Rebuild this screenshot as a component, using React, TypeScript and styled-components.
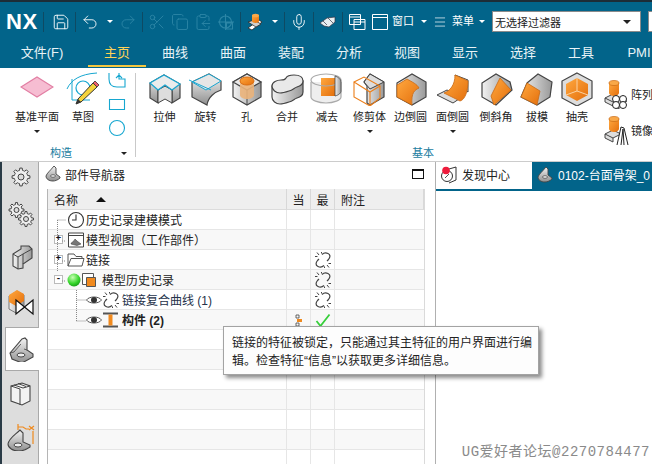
import React, { FC } from "react";
import styled, { createGlobalStyle } from "styled-components";
import { Save, Undo2, Redo2, Scissors, Copy, ClipboardCopy, Mic, Menu } from "lucide-react";

const teal = "#02648a";
const dim = "#2c86a6";
const line = "#444";

const GlobalStyle = createGlobalStyle`
    html, body { margin: 0; padding: 0; background: #fff; }
    body { font-family: "Liberation Sans", "Noto Sans CJK SC", sans-serif; color: #222; }
`;

const gearPath = (cx: number, cy: number, r1: number, r2: number, teeth: number) => {
    let d = "";
    const step = (Math.PI * 2) / teeth;
    for (let i = 0; i < teeth; i++) {
        const a = i * step;
        const pts: [number, number][] = [
            [r1, a - step * 0.5],
            [r1, a - step * 0.28],
            [r2, a - step * 0.17],
            [r2, a + step * 0.17],
            [r1, a + step * 0.28],
        ];
        pts.forEach(([r, t], j) => {
            d += `${i === 0 && j === 0 ? "M" : "L"}${(cx + r * Math.cos(t)).toFixed(2)} ${(cy + r * Math.sin(t)).toFixed(2)} `;
        });
    }
    return d + "Z";
};

const Defs = () => (
    <svg width="0" height="0" style={{ position: "absolute" }}>
        <defs>
            <linearGradient id="gr" x1="0" y1="0" x2="0" y2="1">
                <stop offset="0" stopColor="#f4f4f4" />
                <stop offset="1" stopColor="#8f8f8f" />
            </linearGradient>
            <linearGradient id="gs" x1="0" y1="0" x2="1" y2="0">
                <stop offset="0" stopColor="#f2f2f2" />
                <stop offset="1" stopColor="#999" />
            </linearGradient>
            <linearGradient id="or" x1="0" y1="0" x2="1" y2="1">
                <stop offset="0" stopColor="#ffa83f" />
                <stop offset="1" stopColor="#e46f0c" />
            </linearGradient>
        </defs>
    </svg>
);

const Ico: FC<{ s?: number; w?: number; children: React.ReactNode }> = ({ s = 34, w, children }) => (
    <svg width={w ?? s} height={s} viewBox={`0 0 ${w ?? s} ${s}`} fill="none" style={{ display: "block", flex: "none" }}>
        {children}
    </svg>
);

const Cube = () => (
    <>
        <path d="M3 10 17 2l14 8v15l-14 8-14-8z" fill="url(#gs)" stroke={line} strokeWidth="1.2" />
        <path d="M3 10 17 2l14 8-14 8z" fill="#e9e9e9" stroke={line} strokeWidth="1.2" />
        <path d="M17 18v15" stroke={line} strokeWidth="1" />
    </>
);

const DatumIcon = () => <Ico><path d="M1 15 17 5l16 10-16 10z" fill="#f6bdd2" stroke="#e27ea3" strokeWidth="1.2" /></Ico>;
const SketchIcon = () => (
    <Ico w={34}>
        <path d="M1 17C5 8 14 2 31 1" stroke="#17a7d0" strokeWidth="1" />
        <path d="M6 7v21h18" stroke="#17a7d0" strokeWidth="1" />
        <circle cx="17" cy="16" r="7" stroke="#17a7d0" strokeWidth="1.2" />
        <path d="M12 27 27 11l4 4-16 15-5 2z" fill="#f4d23c" stroke="#333" strokeWidth="1" />
        <path d="M27 11l2-2 4 4-2 2z" fill="#ef5d6c" stroke="#333" strokeWidth=".8" />
        <path d="M10 32l2-5 3 3z" fill="#333" />
    </Ico>
);
const ExtrudeIcon = () => (
    <Ico>
        <path d="M2 11 16 3l16 9v14l-8 5V18l-7-4-7 4v13l-8-5z" fill="url(#gr)" stroke={line} strokeWidth="1.2" />
        <path d="M10 18l7-4 7 4v13l-7-4-7 4z" fill="#ddd" stroke={line} strokeWidth="1" />
        <path d="M2 11 16 3l16 9-8 6-7-5-7 5z" fill="#ececec" stroke="#19a6d1" strokeWidth="1.2" />
    </Ico>
);
const RevolveIcon = () => (
    <Ico>
        <path d="M3 10 20 2l12 7v9c-6 2-13 7-14 15L3 25z" fill="url(#gr)" stroke={line} strokeWidth="1.2" />
        <path d="M3 10 20 2l12 7-15 9z" fill="#e6e6e6" stroke="#19a6d1" strokeWidth="1" />
        <path d="M0 8l22 10" stroke="#19a6d1" strokeWidth="1" />
    </Ico>
);
const HoleIcon = () => (
    <Ico>
        <Cube />
        <path d="M10 9v14c0 2 3 4 7 4s7-2 7-4V9z" fill="#eab27a" opacity=".9" />
        <ellipse cx="17" cy="9" rx="7" ry="4" fill="url(#or)" stroke="#d96c10" />
    </Ico>
);
const MergeIcon = () => (
    <Ico>
        <path d="M2 14V25c0 4 4 7 8 7 3 0 6-1 9-2 4-1 5-3 8-4 3-1 6-2 6-6V9L24 12z" fill="url(#gs)" stroke={line} strokeWidth="1.2" />
        <path d="M2 14c0-4 5-6 9-6 3 0 4 0 5-2 1-2 4-3 8-3 5 0 9 2 9 6s-3 5-6 6c-3 1-4 3-8 4-3 1-6 2-9 2-4 0-8-3-8-7z" fill="#e9e9e9" stroke={line} strokeWidth="1.2" />
    </Ico>
);
const SubtractIcon = () => (
    <Ico>
        <path d="M1 10v15c0 3 7 6 15 6s15-3 15-6V10" fill="#eee" stroke="#aaa" strokeWidth="1.2" />
        <path d="M11 6h14v18H11z" fill="url(#or)" />
        <ellipse cx="16" cy="8" rx="15" ry="6" fill="none" stroke="#aaa" strokeWidth="1.2" />
        <path d="M25 4v20c4-1 6-3 6-5V10c0-3-3-5-6-6z" fill="url(#gs)" stroke={line} strokeWidth=".8" />
    </Ico>
);
const TrimIcon = () => (
    <Ico>
        <path d="M17 2l14 8v15l-14 8-3-2V14l-3-4z" fill="url(#gs)" stroke={line} strokeWidth="1.2" />
        <path d="M11 10 17 2l14 8-14 7z" fill="#ddd" stroke={line} strokeWidth="1" />
        <path d="M1 10l10-5 16 9-10 6zM1 10v15l16 9V20M27 14v12l-10 8" stroke="#ec7f1a" strokeWidth="1.1" />
    </Ico>
);
const EdgeBlendIcon = () => (
    <Ico>
        <path d="M3 11 18 2l14 8v15l-14 8-15-8z" fill="url(#gs)" stroke={line} strokeWidth="1.2" />
        <path d="M3 13 13 7c5 3 10 5 12 9-4 2-8 4-7 17L3 25z" fill="url(#or)" stroke="#c96a14" strokeWidth=".8" />
    </Ico>
);
const FaceBlendIcon = () => (
    <Ico>
        <path d="M19 3 32 8v12l-9-6zM1 23l10-5 15 7-9 6z" fill="#ddd" stroke={line} strokeWidth="1" />
        <path d="M19 3l13 6c0 10-3 19-8 20L8 21c6-2 11-8 11-18z" fill="url(#or)" stroke="#c96a14" strokeWidth=".8" />
    </Ico>
);
const ChamferIcon = () => (
    <Ico>
        <path d="M3 11 17 2l14 8 2 8-16 15-14-8z" fill="url(#gs)" stroke={line} strokeWidth="1.2" />
        <path d="M22 6l11 12-17 15-3-9 3-6z" fill="url(#or)" stroke="#c96a14" strokeWidth=".8" transform="translate(-1 0)" />
    </Ico>
);
const DraftIcon = () => (
    <Ico>
        <path d="M7 11 18 2l14 8-2 15-13 8L1 25z" fill="url(#gs)" stroke={line} strokeWidth="1.2" />
        <path d="M7 11l13 8-3 14L1 25z" fill="url(#or)" stroke="#c96a14" strokeWidth=".8" />
    </Ico>
);
const ShellIcon = () => (
    <Ico>
        <path d="M17 1l15 8v17l-15 8-15-8V9z" fill="#ddd" stroke={line} strokeWidth="1.2" />
        <path d="M17 6 28 12v11l-11 6-11-6V12z" fill="url(#or)" />
        <path d="M17 6v13l-11 4M17 19l11 4" stroke="#fbd2a2" strokeWidth="1" />
    </Ico>
);
const PatternIcon = () => (
    <Ico s={30} w={26}>
        <path d="M2 19l8-4 14 7-8 4zM2 19v4l14 7v-4" fill="#ddd" stroke={line} strokeWidth="1" />
        <path d="M6 4v10c0 1.500 2 3 5 3s5-1.500 5-3V4z" fill="url(#or)" />
        <ellipse cx="11" cy="4" rx="5" ry="2.500" fill="#f9a848" stroke="#c96a14" strokeWidth=".7" />
        <circle cx="13" cy="20" r="3.500" fill="#fff" stroke="#222" />
        <circle cx="20" cy="20" r="3.500" fill="#fff" stroke="#222" />
        <circle cx="13" cy="26" r="3.500" fill="#fff" stroke="#222" />
        <circle cx="20" cy="26" r="3.500" fill="#fff" stroke="#222" />
    </Ico>
);
const MirrorIcon = () => (
    <Ico s={30} w={26}>
        <path d="M2 19l8-4 8 4-8 4zM2 19v4l8 4v-4" fill="#ddd" stroke={line} strokeWidth="1" />
        <path d="M6 4v10c0 1.500 2 3 5 3s5-1.500 5-3V4z" fill="url(#or)" />
        <ellipse cx="11" cy="4" rx="5" ry="2.500" fill="#f9a848" stroke="#c96a14" strokeWidth=".7" />
        <path d="M14 30l4-18 3 1 4 17M18 30l2-16 1 16" stroke="#222" strokeWidth="1" fill="#fff" />
    </Ico>
);

const ToolsIcon = () => (
    <Ico s={18} w={16}>
        <path d="M1 15 12 7l3 2-10 8z" fill="#fff" stroke="#222" strokeWidth=".8" />
        <path d="M1 9l6-2 7 4-5 3z" fill="#cfcfcf" stroke="#222" strokeWidth=".7" />
        <path d="M5 2v6c0 1 1.500 2 3.500 2S12 9 12 8V2z" fill="url(#or)" />
        <ellipse cx="8.500" cy="2.500" rx="3.500" ry="1.800" fill="#f9a848" />
    </Ico>
);
const HandIcon = () => (
    <Ico s={18} w={16}>
        <path d="M0 10l7-5 8-1v5l-6 5-5-1z" fill="#e8eef1" stroke="#334" strokeWidth=".7" />
        <path d="M8 5l5 5M3 8l4 4" stroke="#334" strokeWidth=".7" />
    </Ico>
);
const CascadeIcon = () => (
    <Ico s={18} w={17}>
        <path d="M.5 1.500h11v10H.5zM5 6.500h11v10H5z" fill={teal} stroke="#fff" strokeWidth="1" />
        <path d="M.5 4h11M5 9h11" stroke="#fff" strokeWidth="1" />
    </Ico>
);
const WindowIcon = () => (
    <Ico s={18} w={16}>
        <path d="M.5 1.500h15v15H.5zM.5 4.500h15" stroke="#fff" strokeWidth="1" />
    </Ico>
);
const SnapIcon = () => (
    <Ico s={18}>
        <circle cx="8.500" cy="9" r="6" stroke={dim} strokeWidth="1.100" />
        <path d="M8.500 1v16M1 9h16M9.500 10h6v6h-6z" stroke={dim} strokeWidth="1.100" />
    </Ico>
);

const GearIcon = () => (
    <Ico s={20}>
        <path d={gearPath(10, 10, 6.800, 9, 8)} fill="#eee" stroke={line} />
        <circle cx="10" cy="10" r="3" fill="#dcdcdc" stroke={line} />
    </Ico>
);
const GearsIcon = () => (
    <Ico s={26}>
        <path d={gearPath(8.500, 9, 5.500, 7.500, 8)} fill="#eee" stroke={line} />
        <circle cx="8.500" cy="9" r="2.500" fill="#dcdcdc" stroke={line} />
        <path d={gearPath(18, 18, 5.500, 7.500, 8)} fill="#eee" stroke={line} />
        <circle cx="18" cy="18" r="2.500" fill="#dcdcdc" stroke={line} />
    </Ico>
);
const BlockIcon = () => (
    <Ico s={26}>
        <path d="M5 10 13 5l0-3 8 0 3 3v9l-9 6v4l-5 1-5-3z" fill="url(#gs)" stroke={line} strokeWidth="1.100" />
        <path d="M5 10l5 3 5-3 9-5M10 13v12M15 10l0 10" stroke={line} strokeWidth="1" />
    </Ico>
);
const AssemblyIcon = () => (
    <Ico s={28} w={26}>
        <path d="M1 7l8-5 7 4v13l-8 5-7-4z" fill="url(#gs)" stroke="#777" />
        <path d="M1 6l8-5 7 4v7l-8 5-7-4z" fill="url(#or)" />
        <path d="M8 11 25 25V11L8 25z" fill="#fff" stroke="#111" strokeWidth="1.200" />
    </Ico>
);
const BracketIcon = () => (
    <Ico s={26} w={25}>
        <path d="M1 17 13 3l3-1 2 2v10l6 4v3l-11 6-10-4z" fill="url(#gr)" stroke={line} strokeWidth="1.100" />
        <path d="M1 17l4-1 6-7 1-1M18 14l-3-1" stroke={line} strokeWidth=".8" />
        <ellipse cx="12" cy="19" rx="4" ry="2" fill="#eee" stroke={line} />
    </Ico>
);
const SmallBracket = () => (
    <Ico s={18}>
        <path d="M1 11C2 8 5 6 9 1l2 2v6l4 3v1c-2 2-5 3-7 3-4 0-7-2-7-5z" fill="url(#gr)" stroke={line} strokeWidth=".9" />
        <ellipse cx="8" cy="11" rx="2.500" ry="1.300" fill="#eee" stroke={line} strokeWidth=".7" />
    </Ico>
);
const BooksIcon = () => (
    <Ico s={26}>
        <path d="M3 6l11-3 8 3v15l-8 4-11-4z" fill="#f3f3f3" stroke={line} strokeWidth="1.100" />
        <path d="M3 6l9 3v16M6 5l9 3M10 3.500l8 3M15 8l7-2" stroke={line} strokeWidth="1" />
    </Ico>
);
const DimPartIcon = () => (
    <Ico s={28}>
        <path d="M1 21C2 15 8 12 13 7l3 3v9l7 3v2c-3 2-8 4-11 4-6 0-11-3-11-7z" fill="url(#gr)" stroke={line} strokeWidth="1.100" />
        <ellipse cx="11" cy="22" rx="4" ry="2" fill="#eee" stroke={line} />
        <path d="M11 1v6M11 4h5l3 2h3M22 3l5 4M27 3l-5 4M26 8v13" stroke="#ef8a1f" strokeWidth="1.200" />
    </Ico>
);

const ClockIcon = () => (
    <Ico s={18}>
        <circle cx="9" cy="9" r="7.500" fill="#fff" stroke="#333" strokeWidth="1.100" />
        <path d="M9 3.500V9H5" stroke="#333" strokeWidth="1.100" />
    </Ico>
);
const ViewIcon = () => (
    <Ico s={18}>
        <path d="M1.500 2h15v14h-15zM1.500 4.500h15" stroke="#444" fill="#fff" />
        <path d="M4 13c0-2 3-2 4-5l2 2 4 3-4 1.500z" fill="#777" stroke="#444" strokeWidth=".6" />
    </Ico>
);
const FolderIcon = () => (
    <Ico s={18}>
        <path d="M1 15V3h6l2 2.500h6v2M1 15l3-7.500h13L15 15z" stroke="#555" fill="#fff" />
    </Ico>
);
const BallIcon = () => (
    <Ico s={16} w={14}>
        <defs>
            <radialGradient id="ball" cx=".4" cy=".3" r=".8">
                <stop offset="0" stopColor="#c8ffb4" />
                <stop offset=".6" stopColor="#35d52a" />
                <stop offset="1" stopColor="#118a14" />
            </radialGradient>
        </defs>
        <circle cx="7" cy="8" r="6.500" fill="url(#ball)" />
    </Ico>
);
const HistoryIcon = () => (
    <Ico s={16} w={15}>
        <path d="M.500 1.500h11v11H.500z" fill="#fff" stroke="#555" />
        <path d="M4.500 5.500h9v9h-9z" fill="#f18a1e" stroke="#555" />
    </Ico>
);
const EyeIcon = () => (
    <Ico s={14} w={16}>
        <path d="M.5 7C3 3 13 3 15.500 7 13 11 3 11 .5 7z" fill="#fff" stroke="#555" />
        <circle cx="8" cy="7" r="3" fill="#333" />
    </Ico>
);
const BrokenLinkIcon = () => (
    <Ico s={18}>
        <g stroke="#444" strokeWidth="1.200" fill="none">
            <path d="M8 3.500c2-2 4-2 6-1 3 1.500 2 4 .5 6L13 10" />
            <path d="M10 14.500c-2 2-4 2-6 1-3-1.500-2-4-.5-6L5 8" />
            <path d="M3 1.500 5 4M1 5.500h2.500M7.500 1v1.500M15 16.500 13 14M17 12.500h-2.500M10.500 17v-1.500" strokeWidth="1" />
        </g>
    </Ico>
);
const BeamIcon = () => (
    <Ico s={18}>
        <path d="M1 2.500h15M1 15.500h15" stroke="#555" strokeWidth="1.800" />
        <path d="M6.500 3.500h4v11h-4z" fill="#f18a1e" />
    </Ico>
);
const CheckIcon = () => (
    <Ico s={14} w={16}>
        <path d="M1.500 8l4 5L14.500 1.500" stroke="#36cf3a" strokeWidth="1.800" />
    </Ico>
);
const MiniTree = () => (
    <Ico s={12} w={8}>
        <path d="M1 1h3v3H1zM1 9h3v3H1z" stroke="#444" strokeWidth=".8" />
        <path d="M2 5h5v3H2z" fill="#ef8a1f" />
    </Ico>
);
const DiscoveryIcon = () => (
    <Ico s={18}>
        <path d="M8 3l7-2v13l-7 3" stroke="#333" fill="#fff" />
        <circle cx="6" cy="10" r="5.500" fill="#fff" stroke="#333" />
        <path d="M4 12l4-4" stroke="#555" />
        <circle cx="5" cy="4.500" r="3.800" fill="#ee1c3c" />
    </Ico>
);

const Page = styled.div`
    position: relative;
    width: 652px;
    height: 464px;
    overflow: hidden;
    background: #fff;
    display: flex;
    flex-direction: column;
`;

const TopStrip = styled.div`
    height: 2px;
    background: #1d2d38;
    flex: none;
`;

const TitleBar = styled.div`
    height: 39px;
    flex: none;
    background: ${teal};
    display: flex;
    align-items: center;
    padding-left: 6px;
    color: #fff;
    white-space: nowrap;
    overflow: hidden;
    & svg {
        flex: none;
    }
`;

const Logo = styled.div`
    width: 32px;
    flex: none;
    font-size: 22px;
    font-weight: 700;
    letter-spacing: 0.6px;
    color: #fff;
`;

const Sep = styled.div<{ $left?: number; $right?: number }>`
    width: 1px;
    height: 20px;
    background: #0e4a63;
    margin: 0 ${(p) => p.$right ?? 5}px 0 ${(p) => p.$left ?? 5}px;
    flex: none;
`;

const Cluster = styled.div<{ $gap?: number }>`
    display: flex;
    align-items: center;
    flex: none;
    gap: ${(p) => p.$gap ?? 5}px;
`;

const Caret = styled.span<{ $dark?: boolean }>`
    display: block;
    flex: none;
    width: 0;
    height: 0;
    border-left: 3px solid transparent;
    border-right: 3px solid transparent;
    border-top: 3px solid ${(p) => (p.$dark ? "#222" : "#fff")};
`;

const BarCaret = styled(Caret)<{ $l: number; $r: number }>`
    margin: 0 ${(p) => p.$r}px 0 ${(p) => p.$l}px;
`;

const BarText = styled.span<{ $l: number }>`
    font-size: 11px;
    color: #fff;
    line-height: 1;
    flex: none;
    margin-left: ${(p) => p.$l}px;
`;

const FilterSelect = styled.div`
    width: 149px;
    height: 21px;
    box-sizing: border-box;
    margin-left: 7px;
    background: #fff;
    border: 1px solid #8b8b8b;
    color: #222;
    font-size: 11px;
    padding: 0 9px 0 2px;
    display: flex;
    align-items: center;
    justify-content: space-between;
    flex: none;
`;

const NextBox = styled.div`
    width: 10px;
    height: 21px;
    margin-left: 7px;
    box-sizing: border-box;
    background: #fff;
    border: 1px solid #8b8b8b;
    flex: none;
`;

const FilterCaret = styled(Caret)`
    border-left-width: 4px;
    border-right-width: 4px;
    border-top-width: 4px;
`;

const TabBar = styled.div`
    height: 27px;
    flex: none;
    background: ${teal};
    display: flex;
    padding-left: 8px;
    white-space: nowrap;
    overflow: hidden;
`;

const MenuTab = styled.div<{ $active?: boolean }>`
    flex: none;
    width: 58px;
    height: 26px;
    box-sizing: border-box;
    text-align: center;
    line-height: 24px;
    font-size: 13px;
    color: ${(p) => (p.$active ? "#ffd257" : "#e8f3f7")};
    border-bottom: 2px solid ${(p) => (p.$active ? "#f3c63f" : "transparent")};
`;

const FileTab = styled(MenuTab)`
    width: 80px;
    padding-right: 12px;
`;

const Ribbon = styled.div`
    height: 94px;
    flex: none;
    display: flex;
    border-bottom: 1px solid #ccc;
    box-sizing: border-box;
    white-space: nowrap;
`;

const RibbonGroup = styled.div<{ $w: number; $last?: boolean }>`
    width: ${(p) => p.$w}px;
    flex: none;
    box-sizing: border-box;
    display: flex;
    flex-direction: column;
    position: relative;
    &::after {
        content: "";
        display: ${(p) => (p.$last ? "none" : "block")};
        position: absolute;
        right: 0;
        top: 5px;
        bottom: 4px;
        width: 1px;
        background: #c9c9c9;
    }
`;

const ToolRow = styled.div<{ $pad: number }>`
    height: 77px;
    display: flex;
    padding-top: 4px;
    padding-left: ${(p) => p.$pad}px;
    box-sizing: border-box;
`;

const Tool = styled.div<{ $w: number }>`
    flex: none;
    width: ${(p) => p.$w}px;
    display: flex;
    flex-direction: column;
    align-items: center;
`;

const ToolLabel = styled.div`
    font-size: 11px;
    line-height: 16px;
    margin-top: 3px;
    color: #222;
`;

const ToolCaret = styled(Caret)`
    margin-top: 5px;
`;

const SmallColumn = styled.div`
    width: 18px;
    margin-left: 8px;
    display: flex;
    flex-direction: column;
    align-items: center;
    gap: 9px;
`;

const SideColumn = styled.div`
    margin-left: 7px;
    display: flex;
    flex-direction: column;
    gap: 6px;
    padding-top: 7px;
`;

const SideTool = styled.div`
    display: flex;
    align-items: center;
    gap: 2px;
    font-size: 11px;
    color: #222;
`;

const GroupLabel = styled.div`
    position: relative;
    text-align: center;
    font-size: 11px;
    line-height: 16px;
    color: #1b7d9f;
`;

const LabelText = styled.span<{ $shift: number }>`
    margin-right: ${(p) => p.$shift}px;
`;

const GroupCaret = styled(Caret)`
    position: absolute;
    right: 9px;
    top: 7px;
`;

const Main = styled.div`
    flex: 1;
    min-height: 0;
    display: flex;
`;

const EdgeStrip = styled.div`
    width: 2px;
    flex: none;
    background: #2a3b46;
`;

const Rail = styled.div`
    width: 37px;
    flex: none;
    background: #dddddd;
    border-right: 1px solid #a9a9a9;
    box-sizing: border-box;
    display: flex;
    flex-direction: column;
    padding-left: 3px;
`;

const RailItem = styled.div<{ $h: number; $active?: boolean }>`
    height: ${(p) => p.$h}px;
    flex: none;
    box-sizing: border-box;
    display: flex;
    align-items: center;
    justify-content: center;
    padding-right: 2px;
    background: ${(p) => (p.$active ? "#fff" : "transparent")};
    border: ${(p) => (p.$active ? "1px solid #a9a9a9" : "0")};
    border-right: 0;
    margin-right: ${(p) => (p.$active ? "-1px" : "0")};
    position: relative;
`;

const NavPanel = styled.div`
    width: 396px;
    flex: none;
    display: flex;
    flex-direction: column;
    padding: 0 10px 0 8px;
    box-sizing: border-box;
    background: #fff;
`;

const NavHeader = styled.div`
    height: 27px;
    box-sizing: border-box;
    padding-bottom: 3px;
    flex: none;
    display: flex;
    align-items: center;
    font-size: 12px;
    gap: 2px;
    margin-left: -2px;
    color: #222;
`;

const MaximizeBox = styled.div`
    width: 12px;
    height: 10px;
    box-sizing: border-box;
    border: 1px solid #111;
    border-top-width: 2px;
    margin-left: auto;
    margin-right: 1px;
`;

const Table = styled.div`
    position: relative;
    flex: 1;
    border-left: 1px solid #b5b5b5;
    border-right: 1px solid #dadada;
    display: grid;
    grid-template-columns: 239px 24px 24px 1fr;
    grid-template-rows: 21px repeat(12, 20px) 1fr;
    font-size: 12px;
`;

const HeadCell = styled.div<{ $center?: boolean }>`
    background: #efefef;
    border-right: 1px solid #d8d8d8;
    border-bottom: 1px solid #dcdcdc;
    box-sizing: border-box;
    display: flex;
    align-items: center;
    justify-content: ${(p) => (p.$center ? "center" : "flex-start")};
    padding-left: ${(p) => (p.$center ? 0 : 6)}px;
    color: #222;
    white-space: nowrap;
`;

const SortArrow = styled.span`
    width: 0;
    height: 0;
    margin-left: 18px;
    border-left: 5px solid transparent;
    border-right: 5px solid transparent;
    border-bottom: 5px solid #111;
`;

const BodyCell = styled.div<{ $alt?: boolean; $last?: boolean; $center?: boolean }>`
    background: ${(p) => (p.$alt ? "#f8f8f8" : "#fff")};
    border-right: ${(p) => (p.$last ? "0" : "1px solid #e6e6e6")};
    border-bottom: 1px solid #e6e6e6;
    box-sizing: border-box;
    display: flex;
    align-items: center;
    justify-content: ${(p) => (p.$center ? "center" : "flex-start")};
    min-width: 0;
    overflow: visible;
`;

const NameCell = styled(BodyCell)<{ $indent: number }>`
    padding-left: ${(p) => p.$indent}px;
    white-space: nowrap;
`;

const IconRun = styled.div<{ $gap?: number; $mr?: number }>`
    display: flex;
    align-items: center;
    gap: ${(p) => p.$gap ?? 0}px;
    margin-right: ${(p) => p.$mr ?? 1}px;
    flex: none;
`;

const Expander = styled.span`
    width: 9px;
    height: 9px;
    box-sizing: border-box;
    border: 1px solid #bbb;
    background: #fff;
    margin-right: 4px;
    flex: none;
    font-size: 9px;
    line-height: 6px;
    text-align: center;
    color: #111;
    font-family: "Liberation Mono", monospace;
    font-weight: 700;
`;

const NodeText = styled.span<{ $bold?: boolean; $muted?: boolean }>`
    font-weight: ${(p) => (p.$bold ? 700 : 400)};
    color: ${(p) => (p.$muted ? "#26324a" : "#222")};
`;

const Filler = styled.div`
    border-right: 1px solid #e6e6e6;
    &:nth-last-child(2) {
        border-right: 0;
    }
`;

const TreeLines = styled.svg`
    position: absolute;
    left: 0;
    top: 0;
    pointer-events: none;
`;

const Splitter = styled.div`
    width: 1px;
    flex: none;
    background: #b0b0b0;
`;

const Canvas = styled.div`
    flex: 1;
    min-width: 0;
    display: flex;
    flex-direction: column;
`;

const DocTabs = styled.div`
    height: 27px;
    flex: none;
    display: flex;
    border-bottom: 2px solid ${teal};
    white-space: nowrap;
    overflow: hidden;
    font-size: 12px;
`;

const DocTab = styled.div<{ $active?: boolean; $w: number }>`
    flex: none;
    width: ${(p) => p.$w}px;
    display: flex;
    align-items: center;
    gap: 3px;
    padding: 0 0 2px 5px;
    box-sizing: border-box;
    background: ${(p) => (p.$active ? teal : "#fff")};
    color: ${(p) => (p.$active ? "#fff" : "#222")};
`;

const Tooltip = styled.div`
    position: absolute;
    left: 223px;
    top: 326px;
    width: 316px;
    height: 49px;
    box-sizing: border-box;
    padding: 7px 0 0 8px;
    background: #fdfdfd;
    border: 1px solid #a3a3a3;
    box-shadow: 3px 3px 4px rgba(0, 0, 0, 0.45);
    font-size: 12px;
    line-height: 18px;
    color: #222;
    white-space: nowrap;
`;

const Watermark = styled.div`
    position: absolute;
    right: 2px;
    bottom: 4px;
    font-family: "Liberation Mono", "Noto Sans CJK SC", monospace;
    font-size: 14px;
    letter-spacing: 0.5px;
    color: #8a8a8a;
    white-space: nowrap;
`;

const tabs = ["曲线", "曲面", "装配", "分析", "视图", "显示", "选择", "工具", "PMI"];

const baseTools: { label: string; w: number; icon: React.ReactNode; more?: boolean }[] = [
    { label: "拉伸", w: 41, icon: <ExtrudeIcon /> },
    { label: "旋转", w: 41, icon: <RevolveIcon /> },
    { label: "孔", w: 41, icon: <HoleIcon /> },
    { label: "合并", w: 40, icon: <MergeIcon /> },
    { label: "减去", w: 40, icon: <SubtractIcon /> },
    { label: "修剪体", w: 45, icon: <TrimIcon />, more: true },
    { label: "边倒圆", w: 37, icon: <EdgeBlendIcon /> },
    { label: "面倒圆", w: 47, icon: <FaceBlendIcon />, more: true },
    { label: "倒斜角", w: 40, icon: <ChamferIcon /> },
    { label: "拔模", w: 42, icon: <DraftIcon /> },
    { label: "抽壳", w: 38, icon: <ShellIcon /> },
];

const App: FC = () => {
    const rows: React.ReactNode[] = [
        <NameCell key="a" $indent={19}>
            <IconRun><ClockIcon /></IconRun>
            <NodeText>历史记录建模模式</NodeText>
        </NameCell>,
        <NameCell key="b" $alt $indent={6}>
            <Expander>+</Expander>
            <IconRun><ViewIcon /></IconRun>
            <NodeText>模型视图{"\uFF08"}工作部件{"\uFF09"}</NodeText>
        </NameCell>,
        <NameCell key="c" $indent={6}>
            <Expander>+</Expander>
            <IconRun><FolderIcon /></IconRun>
            <NodeText>链接</NodeText>
        </NameCell>,
        <NameCell key="d" $alt $indent={6}>
            <Expander>-</Expander>
            <IconRun $gap={1} $mr={5}><BallIcon /><HistoryIcon /></IconRun>
            <NodeText>模型历史记录</NodeText>
        </NameCell>,
        <NameCell key="e" $indent={38}>
            <IconRun $mr={2}><EyeIcon /><BrokenLinkIcon /></IconRun>
            <NodeText $muted>链接复合曲线 (1)</NodeText>
        </NameCell>,
        <NameCell key="f" $alt $indent={38}>
            <IconRun $mr={2}><EyeIcon /><BeamIcon /></IconRun>
            <NodeText $bold>构件 (2)</NodeText>
        </NameCell>,
    ];

    return (
        <Page>
            <GlobalStyle />
            <Defs />
            <TopStrip />
            <TitleBar>
                <Logo>NX</Logo>
                <Sep $right={8} />
                <Save size={18} strokeWidth={1.2} color="#fff" />
                <Sep />
                <Undo2 size={18} strokeWidth={1.2} color="#fff" />
                <BarCaret $l={8} $r={6} />
                <Redo2 size={18} strokeWidth={1.2} color={dim} />
                <Sep />
                <Cluster>
                    <Scissors size={18} strokeWidth={1.2} color={dim} />
                    <Copy size={18} strokeWidth={1.2} color={dim} />
                    <ClipboardCopy size={18} strokeWidth={1.2} color={dim} />
                    <SnapIcon />
                </Cluster>
                <Sep $right={6} />
                <ToolsIcon />
                <BarCaret $l={9} $r={6} />
                <Sep $left={0} />
                <Mic size={18} strokeWidth={1.2} color="#fff" />
                <Sep $right={6} />
                <HandIcon />
                <Sep $left={6} $right={6} />
                <Cluster $gap={6}>
                    <CascadeIcon />
                    <WindowIcon />
                </Cluster>
                <BarText $l={4}>窗口</BarText>
                <BarCaret $l={7} $r={6} />
                <Menu size={14} strokeWidth={1.2} color="#fff" />
                <BarText $l={5}>菜单</BarText>
                <BarCaret $l={5} $r={0} />
                <FilterSelect>
                    无选择过滤器
                    <FilterCaret $dark />
                </FilterSelect>
                <NextBox />
            </TitleBar>
            <TabBar>
                <FileTab>文件(F)</FileTab>
                <MenuTab $active>主页</MenuTab>
                {tabs.map((t) => <MenuTab key={t}>{t}</MenuTab>)}
            </TabBar>
            <Ribbon>
                <RibbonGroup $w={136}>
                    <ToolRow $pad={8}>
                        <Tool $w={58}>
                            <DatumIcon />
                            <ToolLabel>基准平面</ToolLabel>
                            <ToolCaret $dark />
                        </Tool>
                        <Tool $w={34}>
                            <SketchIcon />
                            <ToolLabel>草图</ToolLabel>
                        </Tool>
                        <SmallColumn>
                            <Ico s={18}>
                                <path d="M1 1v6c0 5 3 8 8 8h8V7h-6V1M8 6l3-3 3 3" stroke="#17a7d0" strokeWidth="1.100" />
                            </Ico>
                            <Ico s={11} w={18}><path d="M1.500.5h15v10h-15z" stroke="#17a7d0" strokeWidth="1.100" /></Ico>
                            <Ico s={18}><circle cx="9" cy="9" r="7.500" stroke="#17a7d0" strokeWidth="1.100" /></Ico>
                        </SmallColumn>
                    </ToolRow>
                    <GroupLabel>
                        <LabelText $shift={14}>构造</LabelText>
                        <GroupCaret $dark />
                    </GroupLabel>
                </RibbonGroup>
                <RibbonGroup $w={574} $last>
                    <ToolRow $pad={8}>
                        {baseTools.map((t) => (
                            <Tool key={t.label} $w={t.w}>
                                {t.icon}
                                <ToolLabel>{t.label}</ToolLabel>
                                {t.more && <ToolCaret $dark />}
                            </Tool>
                        ))}
                        <SideColumn>
                            <SideTool><PatternIcon />阵列</SideTool>
                            <SideTool><MirrorIcon />镜像</SideTool>
                        </SideColumn>
                    </ToolRow>
                    <GroupLabel>基本</GroupLabel>
                </RibbonGroup>
            </Ribbon>
            <Main>
                <EdgeStrip />
                <Rail>
                    <RailItem $h={30}><GearIcon /></RailItem>
                    <RailItem $h={44}><GearsIcon /></RailItem>
                    <RailItem $h={42}><BlockIcon /></RailItem>
                    <RailItem $h={49}><AssemblyIcon /></RailItem>
                    <RailItem $h={44} $active><BracketIcon /></RailItem>
                    <RailItem $h={44}><BooksIcon /></RailItem>
                    <RailItem $h={44}><DimPartIcon /></RailItem>
                </Rail>
                <NavPanel>
                    <NavHeader>
                        <SmallBracket />
                        部件导航器
                        <MaximizeBox />
                    </NavHeader>
                    <Table>
                        <HeadCell>名称<SortArrow /></HeadCell>
                        <HeadCell $center>当</HeadCell>
                        <HeadCell $center>最</HeadCell>
                        <HeadCell>附注</HeadCell>
                        {Array.from({ length: 12 }).map((_, i) => {
                            const alt = i % 2 === 1;
                            return (
                                <React.Fragment key={i}>
                                    {rows[i] ?? <BodyCell $alt={alt} />}
                                    <BodyCell $alt={alt} $center>{i === 5 && <MiniTree />}</BodyCell>
                                    <BodyCell $alt={alt} $center>
                                        {i >= 2 && i <= 4 && <BrokenLinkIcon />}
                                        {i === 5 && <CheckIcon />}
                                    </BodyCell>
                                    <BodyCell $alt={alt} $last />
                                </React.Fragment>
                            );
                        })}
                        <Filler /><Filler /><Filler /><Filler />
                        <TreeLines width="100" height="140" fill="none">
                            <path
                                d="M9.500 31v52M9.500 31H18M14 52h4M14 72h4M14 92h4M28.500 101v31M28.500 111H38M28.500 132H38"
                                stroke="#888"
                                strokeDasharray="1 1"
                            />
                        </TreeLines>
                    </Table>
                </NavPanel>
                <Splitter />
                <Canvas>
                    <DocTabs>
                        <DocTab $w={96}><DiscoveryIcon />发现中心</DocTab>
                        <DocTab $w={120} $active><SmallBracket />0102-台面骨架_0</DocTab>
                    </DocTabs>
                </Canvas>
            </Main>
            <Tooltip>
                链接的特征被锁定{"\uFF0C"}只能通过其主特征的用户界面进行编<br />
                辑。检查特征“信息”以获取更多详细信息。
            </Tooltip>
            <Watermark>UG爱好者论坛@2270784477</Watermark>
        </Page>
    );
};

export default App;
